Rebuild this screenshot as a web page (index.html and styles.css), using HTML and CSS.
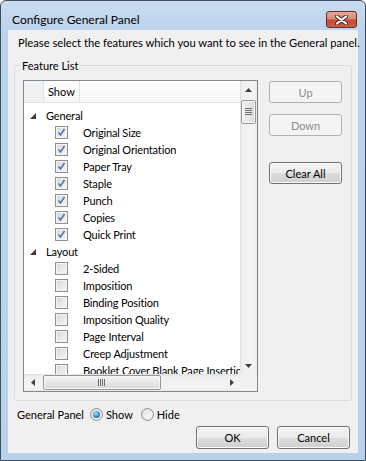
FILE: index.html
```html
<!DOCTYPE html>
<html lang="en">
<head>
<meta charset="UTF-8">
<title>Configure General Panel</title>
<link rel="stylesheet" href="styles.css">
</head>
<body>

<div class="window">
  <div class="titlebar">
    <span class="title">Configure General Panel</span>
    <span class="close">
      <svg width="13" height="10" viewBox="0 0 13 10">
        <path d="M2 1.5 L11 8.5 M11 1.5 L2 8.5" stroke="#4a2420" stroke-width="4" stroke-linecap="round"/>
        <path d="M2 1.5 L11 8.5 M11 1.5 L2 8.5" stroke="#fff" stroke-width="2.2" stroke-linecap="round"/>
      </svg>
    </span>
  </div>

  <div class="client">
    <p class="intro">Please select the features which you want to see in the General panel.</p>

    <fieldset class="group">
      <legend>Feature List</legend>
      <div class="group-body">

        <div class="tree">
          <div class="tree-view">
            <div class="tree-head">
              <span class="head-cell head-blank"></span>
              <span class="head-cell head-show">Show</span>
              <span class="head-cell head-fill"></span>
            </div>
            <div class="tree-body">
              <div class="row row-group">
                <svg class="expander" width="6" height="6" viewBox="0 0 6 6"><polygon points="0,6 6,0 6,6" fill="#3c3c3c"/></svg>
                <span>General</span>
              </div>
              <div class="row row-item"><span class="check on"><svg width="11" height="11" viewBox="0 0 11 11"><path d="M2.5 5.5 L4.5 8 L8.5 2" fill="none" stroke="#5470a8" stroke-width="1.5"/></svg></span><span>Original Size</span></div>
              <div class="row row-item"><span class="check on"><svg width="11" height="11" viewBox="0 0 11 11"><path d="M2.5 5.5 L4.5 8 L8.5 2" fill="none" stroke="#5470a8" stroke-width="1.5"/></svg></span><span>Original Orientation</span></div>
              <div class="row row-item"><span class="check on"><svg width="11" height="11" viewBox="0 0 11 11"><path d="M2.5 5.5 L4.5 8 L8.5 2" fill="none" stroke="#5470a8" stroke-width="1.5"/></svg></span><span>Paper Tray</span></div>
              <div class="row row-item"><span class="check on"><svg width="11" height="11" viewBox="0 0 11 11"><path d="M2.5 5.5 L4.5 8 L8.5 2" fill="none" stroke="#5470a8" stroke-width="1.5"/></svg></span><span>Staple</span></div>
              <div class="row row-item"><span class="check on"><svg width="11" height="11" viewBox="0 0 11 11"><path d="M2.5 5.5 L4.5 8 L8.5 2" fill="none" stroke="#5470a8" stroke-width="1.5"/></svg></span><span>Punch</span></div>
              <div class="row row-item"><span class="check on"><svg width="11" height="11" viewBox="0 0 11 11"><path d="M2.5 5.5 L4.5 8 L8.5 2" fill="none" stroke="#5470a8" stroke-width="1.5"/></svg></span><span>Copies</span></div>
              <div class="row row-item"><span class="check on"><svg width="11" height="11" viewBox="0 0 11 11"><path d="M2.5 5.5 L4.5 8 L8.5 2" fill="none" stroke="#5470a8" stroke-width="1.5"/></svg></span><span>Quick Print</span></div>
              <div class="row row-group">
                <svg class="expander" width="6" height="6" viewBox="0 0 6 6"><polygon points="0,6 6,0 6,6" fill="#3c3c3c"/></svg>
                <span>Layout</span>
              </div>
              <div class="row row-item"><span class="check"></span><span>2-Sided</span></div>
              <div class="row row-item"><span class="check"></span><span>Imposition</span></div>
              <div class="row row-item"><span class="check"></span><span>Binding Position</span></div>
              <div class="row row-item"><span class="check"></span><span>Imposition Quality</span></div>
              <div class="row row-item"><span class="check"></span><span>Page Interval</span></div>
              <div class="row row-item"><span class="check"></span><span>Creep Adjustment</span></div>
              <div class="row row-item"><span class="check"></span><span>Booklet Cover Blank Page Insertion</span></div>
            </div>
          </div>

          <div class="vscroll">
            <span class="arrow"><svg width="7" height="4" viewBox="0 0 7 4"><polygon points="0,4 3.5,0 7,4" fill="#404040"/></svg></span>
            <span class="track track-v">
              <span class="thumb thumb-v">
                <svg width="7" height="8" viewBox="0 0 7 8"><path d="M0 0.5 H7 M0 2.5 H7 M0 4.5 H7 M0 6.5 H7" stroke="#6d6d6d" stroke-width="1"/></svg>
              </span>
            </span>
            <span class="arrow"><svg width="7" height="4" viewBox="0 0 7 4"><polygon points="0,0 7,0 3.5,4" fill="#404040"/></svg></span>
          </div>

          <div class="hscroll">
            <span class="arrow"><svg width="4" height="7" viewBox="0 0 4 7"><polygon points="4,0 4,7 0,3.5" fill="#404040"/></svg></span>
            <span class="track track-h">
              <span class="thumb thumb-h">
                <svg width="8" height="7" viewBox="0 0 8 7"><path d="M0.5 0 V7 M2.5 0 V7 M4.5 0 V7 M6.5 0 V7" stroke="#6d6d6d" stroke-width="1"/></svg>
              </span>
            </span>
            <span class="arrow"><svg width="4" height="7" viewBox="0 0 4 7"><polygon points="0,0 4,3.5 0,7" fill="#404040"/></svg></span>
          </div>

          <div class="corner"></div>
        </div>

        <div class="side-buttons">
          <button class="btn btn-up" disabled>Up</button>
          <button class="btn btn-down" disabled>Down</button>
          <button class="btn btn-clear">Clear All</button>
        </div>

      </div>
    </fieldset>

    <div class="panel-row">
      <span class="panel-label">General Panel</span>
      <span class="radio-opt"><span class="radio on"><span class="dot"></span></span>Show</span>
      <span class="radio-opt radio-hide"><span class="radio"></span>Hide</span>
    </div>

    <div class="footer">
      <button class="btn btn-foot">OK</button>
      <button class="btn btn-foot">Cancel</button>
    </div>
  </div>
</div>

</body>
</html>
```

FILE: styles.css
```css
* {
  box-sizing: border-box;
}
html, body {
  margin: 0;
  padding: 0;
}
body {
  width: 366px;
  height: 461px;
  font-family: Lato, "Liberation Sans", sans-serif;
  font-size: 11px;
  color: #000;
  background: #fff;
}

/* window frame */
.window {
  width: 366px;
  height: 461px;
  border: 1px solid #3e4d5f;
  border-radius: 6px 6px 0 0;
  background: linear-gradient(#cadcf0 0, #bcd3ec 30px, #b9d1ea 100%);
  padding: 0 7px 7px;
  display: flex;
  flex-direction: column;
}
.titlebar {
  height: 29px;
  flex: none;
  display: flex;
  align-items: flex-start;
  padding-top: 10px;
  padding-left: 4px;
}
.title {
  flex: 1;
  font-size: 12px;
  line-height: 17px;
}
.close {
  width: 31px;
  height: 17px;
  margin-right: 1px;
  border: 1px solid #6b2a24;
  border-radius: 3px;
  background: linear-gradient(#e3a99a 0%, #d68a78 45%, #c44a33 55%, #cc5f45 100%);
  display: flex;
  align-items: center;
  justify-content: center;
}

.client {
  flex: 1;
  background: #f0f0f0;
  padding: 5px 6px 4px;
  display: flex;
  flex-direction: column;
}
.intro {
  margin: 0 0 8px 4px;
  font-size: 11.2px;
  line-height: 15px;
  white-space: nowrap;
}

/* group box */
.group {
  margin: 0;
  min-width: 0;
  border: 1px solid #d5dfe5;
  border-radius: 3px;
  padding: 7px 9px 8px 8px;
}
.group legend {
  padding: 0 2px;
  margin-left: -3px;
  line-height: 15px;
}
.group-body {
  display: flex;
  gap: 11px;
  align-items: flex-start;
}

/* tree list */
.tree {
  display: grid;
  grid-template-columns: 216px 17px;
  grid-template-rows: 293px 17px;
  border: 1px solid #828790;
  background: #fff;
}
.tree-view {
  overflow: hidden;
}
.tree-head {
  height: 22px;
  display: flex;
  border-bottom: 1px solid #e5e5e5;
  background: linear-gradient(#ffffff, #f6f7f8);
}
.head-cell {
  border-right: 1px solid #dfe2e6;
}
.head-blank {
  width: 20px;
  background: #f0f1f2;
}
.head-show {
  width: 36px;
  padding-left: 4px;
  line-height: 22px;
}
.head-fill {
  flex: 1;
  border-right: none;
}
.tree-body {
  padding-top: 4px;
  letter-spacing: -0.15px;
}
.row {
  height: 17px;
  display: flex;
  align-items: center;
  white-space: nowrap;
}
.row-group {
  padding-left: 6px;
}
.expander {
  flex: none;
  margin-right: 10px;
}
.row-item {
  padding-left: 31px;
}
.check {
  flex: none;
  width: 13px;
  height: 13px;
  margin-right: 15px;
  border: 1px solid #8e8f8f;
  background: linear-gradient(135deg, #d2d5da, #f9f9f9);
  box-shadow: inset 0 0 0 1px #f4f4f4;
}
.check svg {
  display: block;
}

/* scrollbars */
.vscroll {
  display: flex;
  flex-direction: column;
  background: linear-gradient(to right, #e2e2e2, #f0f0f0 3px, #f3f3f3 14px, #e9e9e9);
}
.hscroll {
  display: flex;
  background: linear-gradient(#e2e2e2, #f0f0f0 3px, #f3f3f3 14px, #e9e9e9);
}
.arrow {
  flex: none;
  width: 17px;
  height: 17px;
  display: flex;
  align-items: center;
  justify-content: center;
}
.track {
  flex: 1;
  display: flex;
}
.track-v {
  flex-direction: column;
  padding-top: 2px;
}
.track-h {
  padding-left: 2px;
}
.thumb {
  border: 1px solid #979797;
  border-radius: 2px;
  display: flex;
  align-items: center;
  justify-content: center;
  box-shadow: inset 0 0 0 1px #f8f8f8;
}
.thumb-v {
  width: 15px;
  height: 24px;
  margin-left: 1px;
  background: linear-gradient(to right, #f3f3f3, #e8e8e8 50%, #d7d7d7);
}
.thumb-h {
  width: 118px;
  height: 15px;
  margin-top: 1px;
  background: linear-gradient(#f3f3f3, #e8e8e8 50%, #d7d7d7);
}
.corner {
  background: #f0f0f0;
}

/* buttons */
.btn {
  height: 22px;
  width: 73px;
  padding: 0;
  font-family: inherit;
  font-size: 11px;
  color: #000;
  border: 1px solid #707070;
  border-radius: 3px;
  background: linear-gradient(#f2f2f2 0%, #ebebeb 50%, #dddddd 50%, #cfcfcf 100%);
  box-shadow: inset 0 0 0 1px #fbfbfb;
}
.btn:disabled {
  color: #8c8c8c;
  border-color: #adb2b5;
  background: #f4f4f4;
  box-shadow: none;
}
.side-buttons {
  display: flex;
  flex-direction: column;
}
.btn-up {
  margin-top: 1px;
}
.btn-down {
  margin-top: 11px;
}
.btn-clear {
  margin-top: 26px;
}

/* bottom */
.panel-row {
  height: 16px;
  margin-top: 5px;
  padding-left: 3px;
  display: flex;
  align-items: center;
  white-space: nowrap;
}
.panel-label {
  margin-right: 6px;
}
.radio-opt {
  display: flex;
  align-items: center;
  gap: 3px;
}
.radio-hide {
  margin-left: 8px;
}
.radio {
  width: 13px;
  height: 13px;
  border-radius: 50%;
  border: 1px solid #8e8f8f;
  background: radial-gradient(circle at 60% 60%, #f7f7f7, #d9dbde);
  display: flex;
  align-items: center;
  justify-content: center;
}
.radio .dot {
  width: 7px;
  height: 7px;
  border-radius: 50%;
  background: radial-gradient(circle at 40% 35%, #b2e2fb, #3a8fd0 50%, #174e86);
}
.footer {
  display: flex;
  justify-content: flex-end;
  gap: 8px;
  margin-top: 4px;
  padding-right: 2px;
}
.btn-foot {
  height: 23px;
}
```
